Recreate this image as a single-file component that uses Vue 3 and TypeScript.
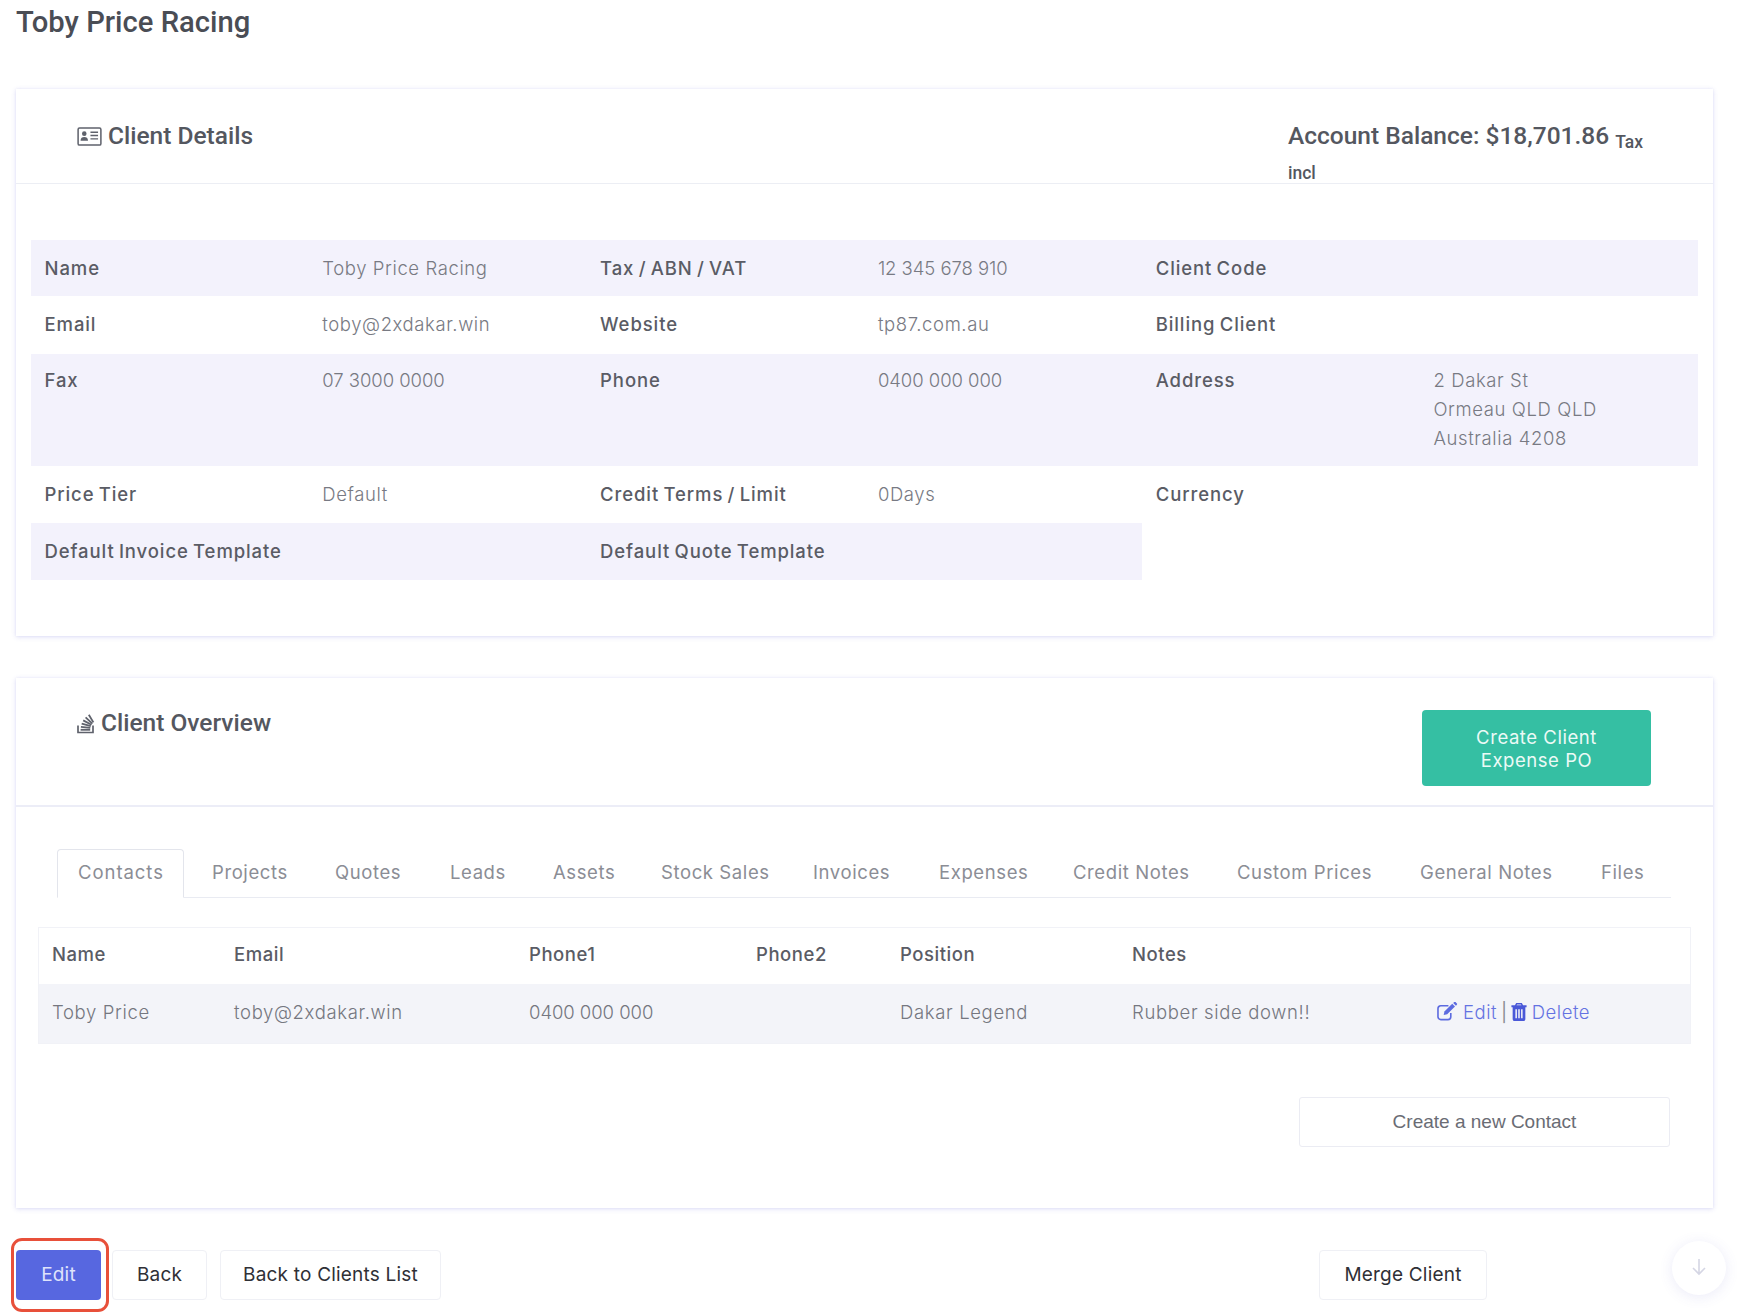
<script setup lang="ts">
interface Cell { text: string; kind: 'label' | 'value'; shade: boolean; num: boolean; tall: boolean }
const rows: [string, string][][] = [
  [['Name', 'Toby Price Racing'], ['Tax / ABN / VAT', '12 345 678 910'], ['Client Code', '']],
  [['Email', 'toby@2xdakar.win'], ['Website', 'tp87.com.au'], ['Billing Client', '']],
  [['Fax', '07 3000 0000'], ['Phone', '0400 000 000'], ['Address', '2 Dakar St\nOrmeau QLD QLD\nAustralia 4208']],
  [['Price Tier', 'Default'], ['Credit Terms / Limit', '0Days'], ['Currency', '']],
  [['Default Invoice Template', ''], ['Default Quote Template', '']],
]
const cells: Cell[] = []
rows.forEach((row, r) => {
  row.forEach(([l, v]) => {
    const tall = r === 2
    cells.push({ text: l, kind: 'label', shade: r % 2 === 0, num: false, tall })
    cells.push({ text: v, kind: 'value', shade: r % 2 === 0, num: /^[\d ]+$/.test(v), tall })
  })
})
const tabs = ['Contacts', 'Projects', 'Quotes', 'Leads', 'Assets', 'Stock Sales', 'Invoices', 'Expenses', 'Credit Notes', 'Custom Prices', 'General Notes', 'Files']
const heads = ['Name', 'Email', 'Phone1', 'Phone2', 'Position', 'Notes', '']
const contact = ['Toby Price', 'toby@2xdakar.win', '0400 000 000', '', 'Dakar Legend', 'Rubber side down!!']
</script>

<template>
  <div class="page">
    <h1 class="title">Toby Price Racing</h1>

    <section class="card">
      <header class="head head-details">
        <h2 class="card-title">
          <svg class="ico-id" viewBox="0 0 26 20" aria-hidden="true">
            <rect x="1" y="1" width="24" height="18" rx="1.5" fill="none" stroke="#5f626c" stroke-width="1.6" />
            <circle cx="7.5" cy="7" r="2.4" fill="#5f626c" />
            <path d="M3.6 14.5c0-3 1.6-4 3.9-4s3.9 1 3.9 4z" fill="#5f626c" />
            <path d="M14 5.5h8M14 9h8M14 12.5h8" stroke="#5f626c" stroke-width="1.5" />
          </svg>
          Client Details
        </h2>
        <div class="balance">Account Balance: $18,701.86 <small>Tax incl</small></div>
      </header>
      <div class="details-body">
        <div class="details">
          <div
            v-for="(c, i) in cells"
            :key="i"
            class="dcell"
            :class="[c.kind, { shade: c.shade, num: c.num, tall: c.tall }]"
          >{{ c.text }}</div>
        </div>
      </div>
    </section>

    <section class="card card-two">
      <header class="head head-overview">
        <h2 class="card-title">
          <svg class="ico-stack" viewBox="0 0 18 22" aria-hidden="true">
            <path d="M1 13.5v7h15v-7" fill="none" stroke="#5f626c" stroke-width="1.7" />
            <g stroke="#5f626c" stroke-width="1.8">
              <path d="M3.6 17.8h9.6" />
              <path d="M3.9 14.9l9.4 .9" />
              <path d="M4.7 11.7l9.1 2.5" />
              <path d="M6.2 8.4l8.3 4.4" />
              <path d="M8.6 5.4l6.8 6.2" />
              <path d="M11.8 2.8l4.6 7.6" />
            </g>
          </svg>
          Client Overview
        </h2>
        <button class="btn-green">Create Client<br />Expense PO</button>
      </header>
      <div class="overview-body">
        <nav class="tabs">
          <span v-for="(t, i) in tabs" :key="t" class="tab" :class="{ active: i === 0 }">{{ t }}</span>
        </nav>
        <div class="contacts">
          <div class="crow chead">
            <div v-for="(h, i) in heads" :key="i" class="ccell">{{ h }}</div>
          </div>
          <div class="crow cbody">
            <div v-for="(v, i) in contact" :key="i" class="ccell" :class="{ num: /^[\d ]+$/.test(v) }">{{ v }}</div>
            <div class="ccell actions">
              <svg class="ico-edit" viewBox="0 0 22 20" aria-hidden="true">
                <path d="M15 11.5v4a3 3 0 0 1-3 3H4.500a3 3 0 0 1-3-3V7a3 3 0 0 1 3-3h8" fill="none" stroke="#5d6be0" stroke-width="1.700" />
                <path d="M7.500 13.700l.8-3.600 8.200-8.200 2.900 2.900-8.200 8.200z" fill="#5d6be0" />
                <path d="M17.500 1l2.900 2.900 1-1a1 1 0 0 0 0-1.400L20 .1a1 1 0 0 0-1.400 0z" fill="#5d6be0" />
              </svg>
              <span class="lnk">Edit</span>
              <span class="sep">|</span>
              <svg class="ico-trash" viewBox="0 0 16 19" aria-hidden="true">
                <path fill-rule="evenodd" d="M5 0h6l1.300 2.500H16v2h-1.300v12.300c0 1.200-.8 2.200-2 2.200H3.300c-1.200 0-2-1-2-2.200V4.500H0v-2h3.700zM6 1.500l-.6 1h5.200l-.6-1zM4.200 6.500v9.500h1.600V6.500zM7.200 6.500v9.500h1.600V6.500zM10.200 6.500v9.500h1.600V6.500z" fill="#4a58d8" />
              </svg>
              <span class="lnk">Delete</span>
            </div>
          </div>
        </div>
        <div class="new-row">
          <button class="btn-new">Create a new Contact</button>
        </div>
      </div>
    </section>

    <footer class="bar">
      <div class="edit-wrap"><button class="btn btn-edit">Edit</button></div>
      <button class="btn btn-back">Back</button>
      <button class="btn btn-list">Back to Clients List</button>
      <button class="btn btn-merge">Merge Client</button>
    </footer>

    <div class="scroll-fab">
      <svg viewBox="0 0 18 20" aria-hidden="true">
        <path d="M9 2v15M3 11l6 6 6-6" fill="none" stroke="#d5d6e4" stroke-width="1.600" />
      </svg>
    </div>
  </div>
</template>

<style>
html, body { background: #ffffff; }
</style>

<style scoped>
.page {
  position: relative;
  width: 1740px;
  height: 1315px;
  box-sizing: border-box;
  padding: 0 27px 0 16px;
  overflow: hidden;
  font-family: "Inter", "Noto Sans", sans-serif;
  color: #495057;
}
.title {
  margin: 0 0 45px;
  height: 44px;
  font: 500 29.200px/44px "Roboto", sans-serif;
  color: #4a4d55;
}
.card {
  background: #fff;
  box-shadow: 0 1px 5px rgba(90, 90, 210, .2), 0 0 2px rgba(90, 90, 210, .08);
}
.card-two { margin-top: 42px; }
.head {
  display: flex;
  justify-content: space-between;
  border-bottom: 1px solid #eceef4;
  box-sizing: border-box;
}
.head-details { height: 95px; padding: 31px 0 0 61px; }
.head-overview { height: 129px; padding: 32px 62px 0 61px; border-bottom: 2px solid #ecedf7; }
.head-overview .card-title { margin-top: -3px; }
.card-title {
  display: flex;
  align-items: center;
  gap: 6px;
  margin: 0;
  height: 32px;
  font: 500 24.500px/32px "Roboto", sans-serif;
  color: #54575f;
}
.ico-id { width: 25px; height: 19px; }
.ico-stack { width: 18px; height: 22px; }
.balance {
  width: 425px;
  box-sizing: border-box;
  margin-top: 2px;
  padding-right: 55px;
  font: 500 24.500px/28px "Roboto", sans-serif;
  color: #54575f;
}
.balance small {
  font-size: 17.500px;
  font-weight: 500;
  line-height: 22px;
  vertical-align: -4px;
}
.details-body { padding: 56px 15px 56px; }
.details {
  display: grid;
  grid-template-columns: repeat(6, 277.800px);
  grid-template-rows: 56px 58px 112px 57px 57px;
}
.dcell {
  padding: 13.500px 13.500px 0;
  box-sizing: border-box;
  font-size: 18.500px;
  line-height: 29px;
  white-space: pre-line;
}
.dcell.tall { padding-top: 11.500px; }
.shade { background: #f3f2fc; }
.label { font-weight: 500; color: #5a5c65; letter-spacing: .9px; word-spacing: -1.500px; }
.value { font-weight: 300; color: #787a83; letter-spacing: .6px; }
.dcell.num, .ccell.num { letter-spacing: -.05px; }
.btn-green {
  width: 229px;
  height: 76px;
  padding: 2px 0 0;
  border: 0;
  border-radius: 4px;
  background: #35bfa3;
  color: #ecfaf6;
  font: 400 18.500px/23px "Inter", sans-serif;
  letter-spacing: .55px;
}
.overview-body { padding: 42px 42px 61px 22px; }
.tabs {
  display: grid;
  grid-template-columns: 134px 123px 115px 103px 108px 152px 126px 134px 164px 183px 181px 91px;
  margin-left: 19px;
  width: 1614px;
  height: 49px;
  box-sizing: border-box;
  border-bottom: 1px solid #e9ebf2;
}
.tab {
  box-sizing: border-box;
  padding: 9px 0 0 21px;
  font-size: 18.500px;
  line-height: 29px;
  font-weight: 400;
  letter-spacing: .6px;
  color: #8b8d95;
  white-space: nowrap;
}
.tab.active {
  width: 127px;
  height: 49px;
  border: 1px solid #e3e5ec;
  border-bottom: 1px solid #fff;
  border-radius: 4px 4px 0 0;
  padding-left: 20px;
  padding-top: 8px;
  background: #fff;
  letter-spacing: .95px;
}
.contacts {
  margin-top: 29px;
  width: 1653px;
  box-sizing: border-box;
  outline: 1px solid #f1f2f7;
  outline-offset: -1px;
}
.crow {
  display: grid;
  grid-template-columns: 182px 295px 227px 144px 232px 304px 269px;
  align-items: center;
  font-size: 18.500px;
}
.chead { height: 57px; padding-bottom: 4px; box-sizing: border-box; font-weight: 500; color: #5a5c65; letter-spacing: .55px; }
.cbody { height: 60px; padding-bottom: 5px; box-sizing: border-box; background: #f3f4f9; font-weight: 300; color: #757780; letter-spacing: .65px; }
.ccell { padding-left: 14px; white-space: nowrap; }
.actions {
  display: flex;
  align-items: center;
  color: #6472e2;
}
.ico-edit { width: 22px; height: 19px; margin-right: 5px; }
.ico-trash { width: 16px; height: 18px; margin: 0 5px 0 3px; }
.sep { margin-left: 4px; color: #8a8c94; font-weight: 400; }
.lnk { letter-spacing: .5px; }
.new-row {
  display: flex;
  justify-content: flex-end;
  margin-top: 53px;
  width: 1632px;
}
.btn-new {
  width: 371px;
  height: 50px;
  background: #fff;
  border: 1px solid #ebecf3;
  border-radius: 3px;
  font: 400 19px/24px "Liberation Sans", Arial, sans-serif;
  color: #6a6c74;
}
.bar {
  display: flex;
  margin-top: 42px;
}
.btn {
  height: 50px;
  box-sizing: border-box;
  background: #fff;
  border: 1px solid #eff0f5;
  border-radius: 4px;
  font: 400 19px/24px "Inter", sans-serif;
  letter-spacing: .2px;
  color: #2f3036;
}
.edit-wrap { position: relative; }
.edit-wrap::after {
  content: "";
  position: absolute;
  left: -5px;
  right: -8px;
  top: -12px;
  bottom: -12px;
  border: 3px solid #e8503a;
  border-radius: 11px;
  pointer-events: none;
}
.btn-edit {
  width: 85px;
  background: #5767e0;
  border: 0;
  color: #dfe3fb;
}
.btn-back { width: 95px; margin-left: 11px; }
.btn-list { width: 221px; margin-left: 13px; }
.btn-merge { width: 168px; margin-left: 878px; }
.scroll-fab {
  position: absolute;
  left: 1672px;
  top: 1241px;
  width: 54px;
  height: 54px;
  border-radius: 50%;
  background: #fff;
  box-shadow: 0 2px 14px rgba(90, 90, 200, .12);
  display: flex;
  align-items: center;
  justify-content: center;
}
.scroll-fab svg { width: 18px; height: 20px; margin-top: -2px; }
</style>
